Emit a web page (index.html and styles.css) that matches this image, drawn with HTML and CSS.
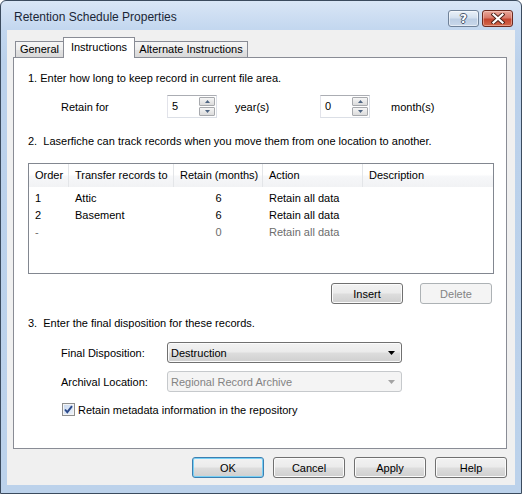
FILE: index.html
```html
<!DOCTYPE html>
<html>
<head>
<meta charset="utf-8">
<link rel="stylesheet" href="styles.css">
</head>
<body>
<div class="window">
  <div class="titlebar">
    <span class="title">Retention Schedule Properties</span>
    <div class="caption-btns">
      <div class="cbtn help"><span>?</span></div>
      <div class="cbtn close">
        <svg width="14" height="11" viewBox="0 0 14 11">
          <path d="M2.5 1.5 L11.5 9.5 M11.5 1.5 L2.5 9.5" stroke="#4a2018" stroke-width="4" stroke-linecap="square" fill="none"/>
          <path d="M2.5 1.5 L11.5 9.5 M11.5 1.5 L2.5 9.5" stroke="#ffffff" stroke-width="2.2" stroke-linecap="square" fill="none"/>
        </svg>
      </div>
    </div>
  </div>
  <div class="client">
    <div class="tabs">
      <div class="tab t-general">General</div>
      <div class="tab active t-instr">Instructions</div>
      <div class="tab t-alt">Alternate Instructions</div>
    </div>
    <div class="panel">
      <p class="step s1">1. Enter how long to keep record in current file area.</p>
      <div class="spinrow">
        <span class="lbl">Retain for</span>
        <div class="spin">
          <span class="val">5</span>
          <div class="spinbtns">
            <div class="sb"><svg width="5" height="3" viewBox="0 0 5 3"><polygon points="0,3 2.5,0 5,3" fill="#4d6482"/></svg></div>
            <div class="sb"><svg width="5" height="3" viewBox="0 0 5 3"><polygon points="0,0 5,0 2.5,3" fill="#4d6482"/></svg></div>
          </div>
        </div>
        <span class="unit years">year(s)</span>
        <div class="spin">
          <span class="val">0</span>
          <div class="spinbtns">
            <div class="sb"><svg width="5" height="3" viewBox="0 0 5 3"><polygon points="0,3 2.5,0 5,3" fill="#4d6482"/></svg></div>
            <div class="sb"><svg width="5" height="3" viewBox="0 0 5 3"><polygon points="0,0 5,0 2.5,3" fill="#4d6482"/></svg></div>
          </div>
        </div>
        <span class="unit months">month(s)</span>
      </div>
      <p class="step s2">2.&nbsp; Laserfiche can track records when you move them from one location to another.</p>
      <div class="list">
        <div class="lhead">
          <div class="hc">Order</div>
          <div class="hc">Transfer records to</div>
          <div class="hc">Retain (months)</div>
          <div class="hc">Action</div>
          <div class="hc last">Description</div>
        </div>
        <div class="lbody">
          <div class="lrow">
            <div class="c">1</div><div class="c">Attic</div><div class="c num">6</div><div class="c">Retain all data</div><div class="c"></div>
          </div>
          <div class="lrow">
            <div class="c">2</div><div class="c">Basement</div><div class="c num">6</div><div class="c">Retain all data</div><div class="c"></div>
          </div>
          <div class="lrow ghost">
            <div class="c">-</div><div class="c"></div><div class="c num">0</div><div class="c">Retain all data</div><div class="c"></div>
          </div>
        </div>
      </div>
      <div class="listbtns">
        <div class="btn">Insert</div>
        <div class="btn disabled">Delete</div>
      </div>
      <p class="step s3">3.&nbsp; Enter the final disposition for these records.</p>
      <div class="field f1">
        <span class="lbl">Final Disposition:</span>
        <div class="combo">
          <span>Destruction</span>
          <svg width="7" height="4" viewBox="0 0 7 4"><polygon points="0,0 7,0 3.5,4" fill="#000"/></svg>
        </div>
      </div>
      <div class="field f2">
        <span class="lbl">Archival Location:</span>
        <div class="combo disabled">
          <span>Regional Record Archive</span>
          <svg width="7" height="4" viewBox="0 0 7 4"><polygon points="0,0 7,0 3.5,4" fill="#a3a3a3"/></svg>
        </div>
      </div>
      <div class="check">
        <span class="box">
          <svg width="11" height="11" viewBox="0 0 11 11"><path d="M2 5.5 L4.3 8.2 L9 2.2" stroke="#2b4a8b" stroke-width="1.9" fill="none"/></svg>
        </span>
        <span>Retain metadata information in the repository</span>
      </div>
    </div>
    <div class="dlgbtns">
      <div class="btn default">OK</div>
      <div class="btn">Cancel</div>
      <div class="btn">Apply</div>
      <div class="btn">Help</div>
    </div>
  </div>
</div>
</body>
</html>
```
FILE: styles.css
```css
html, body {
  margin: 0;
  padding: 0;
  background: #ffffff;
}
body {
  font-family: "Liberation Sans", Arial, sans-serif;
  font-size: 11px;
  font-weight: 400;
  color: #000;
}
.window {
  width: 522px;
  height: 494px;
  box-sizing: border-box;
  border: 1px solid #3b4b5e;
  border-radius: 6px 6px 0 0;
  background: linear-gradient(180deg, #d9e6f6 0px, #c3d7ef 28px, #bbd1eb 60px, #bcd2eb 100%);
  padding: 0 6px 8px 6px;
  display: flex;
  flex-direction: column;
}
.titlebar {
  height: 29px;
  display: flex;
  justify-content: space-between;
  align-items: flex-start;
  padding: 0 2px 0 7px;
}
.title {
  font-size: 12px;
  line-height: 15px;
  margin-top: 9px;
  color: #1a2636;
}
.caption-btns {
  display: flex;
  gap: 3px;
  margin-top: 9px;
}
.cbtn {
  height: 17px;
  box-sizing: border-box;
  border-radius: 3px;
  display: flex;
  align-items: center;
  justify-content: center;
}
.help {
  width: 31px;
  border: 1px solid #6f8198;
  background: linear-gradient(180deg, #eaf1f9 0%, #d3e0ef 45%, #bccee4 55%, #c9d8ea 100%);
  box-shadow: inset 0 0 0 1px rgba(255,255,255,0.5);
}
.help span {
  font-family: "DejaVu Sans", sans-serif;
  font-weight: bold;
  font-size: 12px;
  line-height: 12px;
  color: #ffffff;
  text-shadow: 1px 0 0 #47566b, -1px 0 0 #47566b, 0 1px 0 #47566b, 0 -1px 0 #47566b;
}
.close {
  width: 31px;
  border: 1px solid #6b2a20;
  background: linear-gradient(180deg, #e9a99c 0%, #d8796a 45%, #c4452f 55%, #d36a4c 100%);
  box-shadow: inset 0 0 0 1px rgba(255,220,210,0.45);
}
.client {
  flex: 1;
  background: #f0f0f0;
  display: flex;
  flex-direction: column;
}
.tabs {
  display: flex;
  align-items: flex-end;
  height: 20px;
  margin: 7px 0 0 8px;
}
.tab {
  box-sizing: border-box;
  height: 16px;
  border: 1px solid #898c95;
  border-bottom: none;
  background: linear-gradient(180deg, #f5f5f5 0%, #eeeeee 50%, #e3e3e3 51%, #d9d9d9 100%);
  text-align: center;
  line-height: 15px;
}
.t-general { width: 48px; border-right: none; }
.t-instr { width: 72px; }
.t-alt { width: 113px; border-left: none; }
.tab.active {
  height: 21px;
  margin-bottom: -1px;
  background: #ffffff;
  line-height: 19px;
  position: relative;
  z-index: 1;
}
.panel {
  box-sizing: border-box;
  height: 392px;
  margin: 0 8px 0 6px;
  background: #ffffff;
  border: 1px solid #898c95;
  padding: 0 0 0 14px;
  display: flex;
  flex-direction: column;
}
.step {
  margin: 0;
  line-height: 14px;
  white-space: nowrap;
}
.s1 { margin-top: 13px; }
.s2 { margin-top: 16px; }
.s3 { margin-top: 12px; }
.spinrow {
  margin-top: 10px;
  height: 23px;
  display: flex;
  align-items: center;
  padding-left: 33px;
}
.lbl {
  width: 106px;
  flex: none;
}
.spin {
  width: 50px;
  height: 23px;
  box-sizing: border-box;
  border: 1px solid #dbdfe6;
  border-top-color: #abadb3;
  border-left-color: #e2e3ea;
  display: flex;
  align-items: center;
  justify-content: space-between;
  padding: 0 0 0 4px;
  background: #fff;
}
.val {
  line-height: 14px;
  margin-top: -1px;
}
.spinbtns {
  display: flex;
  flex-direction: column;
  gap: 1px;
  padding: 1px 1px 1px 0;
}
.sb {
  width: 16px;
  height: 9px;
  box-sizing: border-box;
  border: 1px solid #a7a9ad;
  border-radius: 1px;
  background: linear-gradient(180deg, #f6f6f6 0%, #e8e8e8 50%, #dcdcdc 100%);
  display: flex;
  align-items: center;
  justify-content: center;
}
.unit.years { margin-left: 18px; width: 85px; }
.unit.months { margin-left: 21px; }
.list {
  margin-top: 15px;
  width: 466px;
  height: 111px;
  box-sizing: border-box;
  border: 1px solid #828790;
  display: flex;
  flex-direction: column;
}
.lhead, .lrow {
  display: grid;
  grid-template-columns: 40px 105px 89px 100px 130px;
}
.lhead {
  height: 23px;
  background: linear-gradient(180deg, #ffffff 0%, #ffffff 45%, #f6f7f9 55%, #f1f2f4 100%);
}
.hc {
  line-height: 23px;
  padding-left: 6px;
  border-right: 1px solid #e3e5e8;
  box-sizing: border-box;
  white-space: nowrap;
}
.hc.last { border-right: none; }
.lbody { padding-top: 3px; }
.lrow { height: 17px; }
.c {
  line-height: 17px;
  padding-left: 6px;
  white-space: nowrap;
}
.c.num {
  padding-left: 0;
  text-align: center;
}
.lrow.ghost { color: #6d6d6d; }
.listbtns {
  margin-top: 9px;
  width: 466px;
  display: flex;
  justify-content: flex-end;
  gap: 17px;
  padding-right: 2px;
  box-sizing: border-box;
}
.btn {
  width: 72px;
  height: 21px;
  box-sizing: border-box;
  border: 1px solid #707070;
  border-radius: 3px;
  background: linear-gradient(180deg, #f2f2f2 0%, #ebebeb 48%, #dddddd 52%, #cfcfcf 100%);
  box-shadow: inset 0 0 0 1px #fbfbfb;
  display: flex;
  align-items: center;
  justify-content: center;
  line-height: 14px;
  font-weight: 400;
}
.btn.disabled {
  border-color: #adb2b5;
  background: #f4f4f4;
  box-shadow: none;
  color: #838383;
}
.btn.default {
  border-color: #3c7fb1;
  box-shadow: inset 0 0 0 1px #78d0f5;
}
.field {
  height: 21px;
  display: flex;
  align-items: center;
  padding-left: 33px;
}
.f1 { margin-top: 12px; }
.f2 { margin-top: 8px; }
.combo {
  width: 235px;
  height: 21px;
  box-sizing: border-box;
  border: 1px solid #707070;
  border-radius: 3px;
  background: linear-gradient(180deg, #f2f2f2 0%, #ebebeb 48%, #dddddd 52%, #cfcfcf 100%);
  box-shadow: inset 0 0 0 1px #fbfbfb;
  display: flex;
  align-items: center;
  justify-content: space-between;
  padding: 0 6px 0 3px;
}
.combo.disabled {
  border-color: #c6c9cc;
  background: #f4f4f4;
  box-shadow: none;
  color: #838383;
}
.check {
  margin-top: 11px;
  margin-left: 34px;
  height: 13px;
  display: flex;
  align-items: center;
  gap: 3px;
}
.box {
  width: 13px;
  height: 13px;
  box-sizing: border-box;
  border: 1px solid #8e8f8f;
  background: linear-gradient(135deg, #c8d8ef 0%, #eef3fa 100%);
  box-shadow: inset 0 0 0 1px #f4f4f4;
  display: flex;
  align-items: center;
  justify-content: center;
}
.dlgbtns {
  margin: 8px 8px 0 0;
  display: flex;
  justify-content: flex-end;
  gap: 9px;
}
```
